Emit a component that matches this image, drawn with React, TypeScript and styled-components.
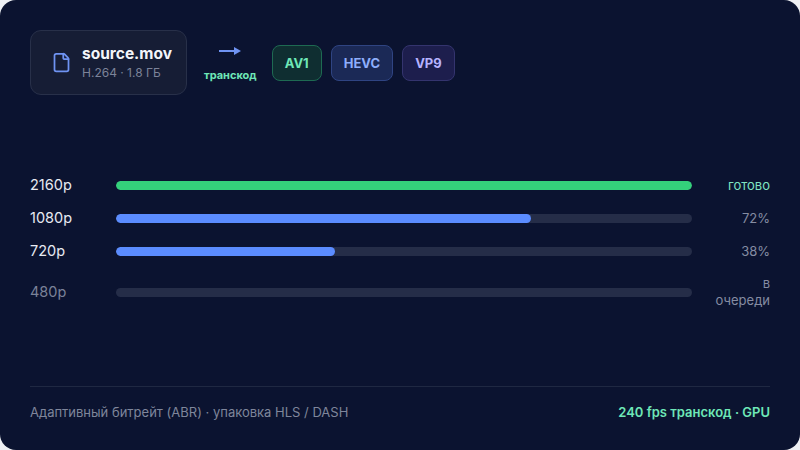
import React from 'react'
import styled, { createGlobalStyle } from 'styled-components'
import { File } from 'lucide-react'

const GlobalStyle = createGlobalStyle`
  html, body {
    margin: 0;
    padding: 0;
    background: #eef0f4;
  }
  body {
    font-family: Inter, 'Noto Sans', sans-serif;
    -webkit-font-smoothing: antialiased;
  }
`

type Tone = 'green' | 'blue' | 'violet'

const codecs: { name: string; tone: Tone }[] = [
  { name: 'AV1', tone: 'green' },
  { name: 'HEVC', tone: 'blue' },
  { name: 'VP9', tone: 'violet' },
]

const renditions = [
  { label: '2160p', progress: 100, status: 'готово', state: 'done' as const },
  { label: '1080p', progress: 72, status: '72%', state: 'active' as const },
  { label: '720p', progress: 38, status: '38%', state: 'active' as const },
  { label: '480p', progress: 0, status: 'в очереди', state: 'queued' as const },
]

type RowState = 'done' | 'active' | 'queued'

const ArrowIcon = () => (
  <svg width="22" height="10" viewBox="0 0 22 10">
    <line x1="0" y1="5" x2="17" y2="5" stroke="#6f93f2" strokeWidth="2" strokeLinecap="round" />
    <polygon points="15,1 22,5 15,9" fill="#6f93f2" />
  </svg>
)

export default function App() {
  return (
    <>
      <GlobalStyle />
      <Card>
        <Header>
          <SourceBox>
            <File size={21} strokeWidth={2} color="#6f93f2" />
            <SourceText>
              <SourceName>source.mov</SourceName>
              <SourceMeta>H.264 · 1.8 ГБ</SourceMeta>
            </SourceText>
          </SourceBox>
          <Transcode>
            <ArrowIcon />
            <TranscodeLabel>транскод</TranscodeLabel>
          </Transcode>
          <Chips>
            {codecs.map(({ name, tone }) => (
              <Chip key={name} $tone={tone}>
                {name}
              </Chip>
            ))}
          </Chips>
        </Header>

        <Body>
          <Rows>
            {renditions.map(({ label, progress, status, state }) => (
              <Row key={label}>
                <RowLabel $state={state}>{label}</RowLabel>
                <Track>
                  <Fill $state={state} style={{ width: `${progress}%` }} />
                </Track>
                <Status $state={state}>{status}</Status>
              </Row>
            ))}
          </Rows>
        </Body>

        <Footer>
          <FooterNote>Адаптивный битрейт (ABR) · упаковка HLS / DASH</FooterNote>
          <FooterStat>240 fps транскод · GPU</FooterStat>
        </Footer>
      </Card>
    </>
  )
}

const Card = styled.div`
  width: 800px;
  height: 450px;
  box-sizing: border-box;
  background: #0b1330;
  border-radius: 16px;
  padding: 30px 30px 0;
  display: flex;
  flex-direction: column;
  overflow: hidden;
`

const Header = styled.div`
  display: flex;
  align-items: center;
`

const SourceBox = styled.div`
  width: 157px;
  height: 65px;
  box-sizing: border-box;
  display: flex;
  align-items: center;
  gap: 10px;
  padding: 0 14px 0 20px;
  background: #161d35;
  border: 1px solid #283049;
  border-radius: 11px;
`

const SourceText = styled.div`
  display: flex;
  flex-direction: column;
  gap: 2px;
`

const SourceName = styled.div`
  font-size: 15.5px;
  font-weight: 700;
  color: #f3f5fa;
  line-height: 18px;
`

const SourceMeta = styled.div`
  font-size: 12px;
  color: #7c8399;
  line-height: 15px;
`

const Transcode = styled.div`
  display: flex;
  flex-direction: column;
  align-items: center;
  margin: 0 15px 0 17px;
  padding-top: 2px;
`

const TranscodeLabel = styled.div`
  font-size: 11px;
  font-weight: 700;
  color: #6ee7b7;
  margin-top: 12px;
`

const Chips = styled.div`
  display: flex;
  gap: 9px;
`

const chipTones: Record<Tone, { bg: string; border: string; color: string }> = {
  green: { bg: '#0f2e31', border: '#1e6a52', color: '#6ee7b7' },
  blue: { bg: '#1b2956', border: '#2f4482', color: '#8eaefc' },
  violet: { bg: '#1d1e4d', border: '#34346e', color: '#b6b2ff' },
}

const Chip = styled.div<{ $tone: Tone }>`
  height: 36px;
  box-sizing: border-box;
  padding: 0 12px;
  display: flex;
  align-items: center;
  font-size: 13px;
  font-weight: 700;
  border-radius: 8px;
  background: ${({ $tone }) => chipTones[$tone].bg};
  border: 1px solid ${({ $tone }) => chipTones[$tone].border};
  color: ${({ $tone }) => chipTones[$tone].color};
`

const Body = styled.div`
  flex: 1;
  display: flex;
  flex-direction: column;
  justify-content: center;
  padding-top: 4px;
`

const Rows = styled.div`
  display: flex;
  flex-direction: column;
  gap: 15px;
`

const Row = styled.div`
  display: grid;
  grid-template-columns: 72px 1fr 64px;
  column-gap: 14px;
  align-items: center;
`

const RowLabel = styled.div<{ $state: RowState }>`
  font-size: 14.5px;
  line-height: 18px;
  color: ${({ $state }) => ($state === 'queued' ? '#7b8298' : '#e7eaf2')};
`

const Track = styled.div`
  height: 9px;
  border-radius: 5px;
  background: #252d48;
  overflow: hidden;
`

const Fill = styled.div<{ $state: RowState }>`
  height: 100%;
  border-radius: 5px;
  background: ${({ $state }) => ($state === 'done' ? '#34d17b' : '#5b8cff')};
`

const Status = styled.div<{ $state: RowState }>`
  font-size: 13px;
  line-height: 17px;
  text-align: right;
  color: ${({ $state }) => ($state === 'done' ? '#7fe3c2' : '#858ca2')};
`

const Footer = styled.div`
  height: 64px;
  box-sizing: border-box;
  border-top: 1px solid #1f2842;
  display: flex;
  align-items: center;
  justify-content: space-between;
  padding-bottom: 14px;
`

const FooterNote = styled.div`
  font-size: 13px;
  color: #7f869b;
`

const FooterStat = styled.div`
  font-size: 13px;
  font-weight: 600;
  color: #6ee7b7;
`
